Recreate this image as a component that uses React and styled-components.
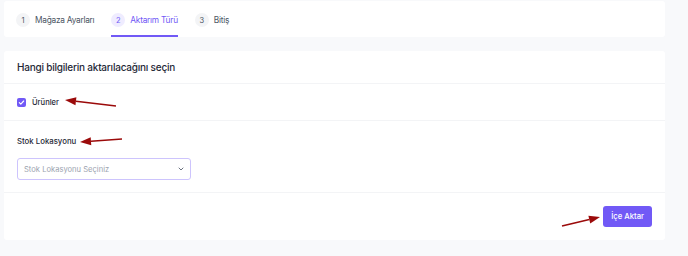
import React from 'react';
import styled, { createGlobalStyle } from 'styled-components';

const purple = '#7159f6';

const GlobalStyle = createGlobalStyle`
  html, body {
    margin: 0;
    padding: 0;
    background: #f8f9fb;
    font-family: Inter, "Noto Sans", sans-serif;
    color: #1f2937;
  }
`;

const Page = styled.div`
  position: relative;
  width: 688px;
  height: 256px;
  box-sizing: border-box;
  padding: 1px 23px 0 4px;
  display: flex;
  flex-direction: column;
  gap: 14px;
`;

const Card = styled.div`
  background: #fff;
  border-radius: 3px;
`;

const Steps = styled(Card)`
  height: 36px;
  display: flex;
  padding: 0 12px;
  gap: 17px;
`;

const Step = styled.div`
  display: flex;
  align-items: center;
  gap: 5px;
  box-sizing: border-box;
  height: 36px;
  border-bottom: 2px solid ${(p) => (p.$active ? purple : 'transparent')};
  padding-top: 4px;
  font-size: 8.3px;
  letter-spacing: -0.25px;
  color: ${(p) => (p.$active ? purple : '#4b5563')};
`;

const StepNo = styled.span`
  width: 14px;
  height: 14px;
  border-radius: 50%;
  display: flex;
  align-items: center;
  justify-content: center;
  font-size: 7.5px;
  letter-spacing: 0;
  background: ${(p) => (p.$active ? '#efecff' : '#f3f4f6')};
`;

const Panel = styled(Card)`
  display: flex;
  flex-direction: column;
`;

const Section = styled.div`
  padding: 0 13px;
  border-bottom: 1px solid ${(p) => (p.$last ? 'transparent' : '#f3f4f6')};
  height: ${(p) => p.$h}px;
  box-sizing: border-box;
  display: flex;
  flex-direction: column;
  justify-content: ${(p) => p.$justify || 'center'};
  align-items: ${(p) => p.$align || 'stretch'};
`;

const Title = styled.h2`
  margin: 0;
  font-size: 10px;
  letter-spacing: -0.22px;
  font-weight: 500;
  color: #1f2937;
`;

const CheckRow = styled.label`
  display: flex;
  align-items: center;
  gap: 6px;
  font-size: 7.6px;
  font-weight: 500;
  color: #1f2937;
`;

const Box = styled.span`
  width: 9px;
  height: 9px;
  border-radius: 2px;
  background: ${purple};
  display: flex;
  align-items: center;
  justify-content: center;
`;

const FieldLabel = styled.div`
  font-size: 7.8px;
  font-weight: 500;
  color: #1f2937;
  margin-top: 15px;
`;

const Select = styled.div`
  margin-top: 12px;
  width: 174px;
  height: 22px;
  box-sizing: border-box;
  border: 1px solid #cdc4fd;
  border-radius: 3px;
  display: flex;
  align-items: center;
  justify-content: space-between;
  padding: 0 5px 0 6px;
  font-size: 7.6px;
  color: #9ca3af;
`;

const Button = styled.button`
  height: 21px;
  padding: 0 8px;
  border: 0;
  border-radius: 3px;
  background: ${purple};
  color: #fff;
  font-family: inherit;
  font-size: 7.7px;
  font-weight: 500;
`;

const Overlay = styled.svg`
  position: absolute;
  left: 0;
  top: 0;
  pointer-events: none;
`;

const Arrow = ({ x1, y1, x2, y2 }) => {
  const a = Math.atan2(y2 - y1, x2 - x1);
  const len = 11;
  const w = 4;
  const bx = x2 - len * Math.cos(a);
  const by = y2 - len * Math.sin(a);
  const px = -Math.sin(a) * w;
  const py = Math.cos(a) * w;
  return (
    <g fill="#9b0a0a" stroke="#9b0a0a">
      <line x1={x1} y1={y1} x2={bx} y2={by} strokeWidth="1.6" />
      <polygon points={`${x2},${y2} ${bx + px},${by + py} ${bx - px},${by - py}`} stroke="none" />
    </g>
  );
};

export default function App() {
  return (
    <>
      <GlobalStyle />
      <Page>
        <Steps>
          <Step><StepNo>1</StepNo>Mağaza Ayarları</Step>
          <Step $active><StepNo $active>2</StepNo>Aktarım Türü</Step>
          <Step><StepNo>3</StepNo>Bitiş</Step>
        </Steps>
        <Panel>
          <Section $h={33}>
            <Title>Hangi bilgilerin aktarılacağını seçin</Title>
          </Section>
          <Section $h={37}>
            <CheckRow>
              <Box>
                <svg width="7" height="7" viewBox="0 0 8 8">
                  <path d="M1.5 4.2 L3.2 5.8 L6.5 2.3" fill="none" stroke="#fff" strokeWidth="1.3" strokeLinecap="round" strokeLinejoin="round" />
                </svg>
              </Box>
              Ürünler
            </CheckRow>
          </Section>
          <Section $h={72} $justify="flex-start">
            <FieldLabel>Stok Lokasyonu</FieldLabel>
            <Select>
              Stok Lokasyonu Seçiniz
              <svg width="8" height="8" viewBox="0 0 8 8">
                <path d="M2 3 L4 5 L6 3" fill="none" stroke="#6b7280" strokeWidth="1" strokeLinecap="round" />
              </svg>
            </Select>
          </Section>
          <Section $h={47} $align="flex-end" $last>
            <Button>İçe Aktar</Button>
          </Section>
        </Panel>
        <Overlay width="688" height="256">
          <Arrow x1={116} y1={106} x2={65} y2={100} />
          <Arrow x1={122} y1={139} x2={80} y2={142} />
          <Arrow x1={562} y1={226} x2={600} y2={217} />
        </Overlay>
      </Page>
    </>
  );
}
